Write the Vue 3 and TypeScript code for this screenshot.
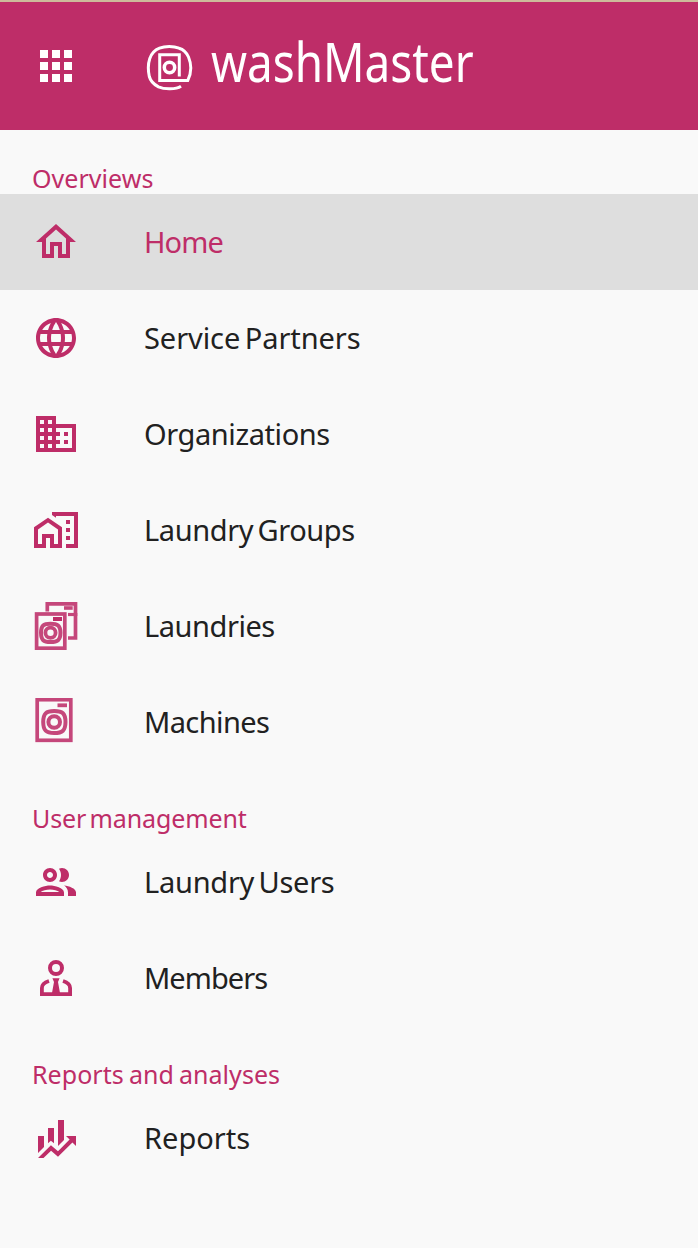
<script setup lang="ts">
interface Spaced {
  letter: number
  word?: number
}

interface MenuItem extends Spaced {
  label: string
  icon: string
  active?: boolean
}

interface MenuSection extends Spaced {
  title: string
  items: MenuItem[]
}

const paths: Record<string, string> = {
  home: 'M12 5.69l5 4.5V18h-2v-6H9v6H7v-7.81l5-4.5M12 3L2 12h3v8h6v-6h2v6h6v-8h3L12 3z',
  globe:
    'M11.99 2C6.47 2 2 6.48 2 12s4.47 10 9.99 10C17.52 22 22 17.52 22 12S17.52 2 11.99 2zm6.93 6h-2.95c-.32-1.25-.78-2.45-1.38-3.56 1.84.63 3.37 1.91 4.33 3.56zM12 4.04c.83 1.2 1.48 2.53 1.91 3.96h-3.82c.43-1.43 1.08-2.76 1.91-3.96zM4.26 14C4.1 13.36 4 12.69 4 12s.1-1.36.26-2h3.38c-.08.66-.14 1.32-.14 2s.06 1.34.14 2H4.26zm.82 2h2.95c.32 1.25.78 2.45 1.38 3.56-1.84-.63-3.37-1.9-4.33-3.56zm2.95-8H5.08c.96-1.66 2.49-2.93 4.33-3.56C8.81 5.55 8.35 6.75 8.03 8zM12 19.96c-.83-1.2-1.48-2.53-1.91-3.96h3.82c-.43 1.43-1.08 2.76-1.91 3.96zM14.34 14H9.66c-.09-.66-.16-1.32-.16-2s.07-1.35.16-2h4.68c.09.65.16 1.32.16 2s-.07 1.34-.16 2zm.25 5.56c.6-1.11 1.06-2.31 1.38-3.56h2.95c-.96 1.65-2.49 2.93-4.33 3.56zM16.36 14c.08-.66.14-1.32.14-2s-.06-1.34-.14-2h3.38c.16.64.26 1.31.26 2s-.1 1.36-.26 2h-3.38z',
  building:
    'M12 7V3H2v18h20V7H12zM6 19H4v-2h2v2zm0-4H4v-2h2v2zm0-4H4V9h2v2zm0-4H4V5h2v2zm4 12H8v-2h2v2zm0-4H8v-2h2v2zm0-4H8V9h2v2zm0-4H8V5h2v2zm10 12h-8v-2h2v-2h-2v-2h2v-2h-2V9h8v10zm-2-8h-2v2h2v-2zm0 4h-2v2h2v-2z',
  homeWork:
    'M17 15h2v2h-2zM17 11h2v2h-2zM17 7h2v2h-2zM10 3v1.5l2 1.4V5h9v14h-4v2h6V3zM8 5.9L1 10.6V21h6v-5h2v5h6V10.6zM8 8.3l5 3.4V19h-2v-5H5v5H3v-7.3z',
  people:
    'M9 13.75c-2.34 0-7 1.17-7 3.5V19h14v-1.75c0-2.33-4.66-3.5-7-3.5zM4.34 17c.84-.58 2.87-1.25 4.66-1.25s3.82.67 4.66 1.25H4.34zM9 12c1.93 0 3.5-1.57 3.5-3.5S10.93 5 9 5 5.5 6.57 5.5 8.5 7.07 12 9 12zm0-5c.83 0 1.5.67 1.5 1.5S9.83 10 9 10s-1.5-.67-1.5-1.5S8.17 7 9 7zm7.04 6.81c1.16.84 1.96 1.96 1.96 3.44V19h4v-1.75c0-2.02-3.5-3.17-5.96-3.44zM15 12c1.93 0 3.5-1.57 3.5-3.5S16.93 5 15 5c-.54 0-1.04.13-1.5.35.63.89 1 1.98 1 3.15s-.37 2.26-1 3.15c.46.22.96.35 1.5.35z',
  chart:
    'M6,16.5L3,19.44V11H6M11,14.66L9.43,13.32L8,14.64V7H11M16,13L13,16V3H16M18.81,12.81L17,11H22V16L20.21,14.21L13,21.36L9.53,18.34L5.75,22H3L9.47,15.66L13,18.64',
}

const sections: MenuSection[] = [
  {
    title: 'Overviews',
    letter: 0.05,
    items: [
      { label: 'Home', icon: 'home', letter: -0.9, active: true },
      { label: 'Service Partners', icon: 'globe', letter: -0.07, word: -3 },
      { label: 'Organizations', icon: 'building', letter: -0.4 },
      { label: 'Laundry Groups', icon: 'homeWork', letter: -0.38, word: -3 },
      { label: 'Laundries', icon: 'laundries', letter: -0.45 },
      { label: 'Machines', icon: 'machine', letter: -0.6 },
    ],
  },
  {
    title: 'User management',
    letter: -0.12,
    word: -3,
    items: [
      { label: 'Laundry Users', icon: 'people', letter: -0.25, word: -3 },
      { label: 'Members', icon: 'member', letter: -0.95 },
    ],
  },
  {
    title: 'Reports and analyses',
    letter: 0.05,
    word: -1.5,
    items: [{ label: 'Reports', icon: 'chart', letter: 0 }],
  },
]

function spacing(text: Spaced) {
  return { letterSpacing: `${text.letter}px`, wordSpacing: `${text.word ?? 0}px` }
}
</script>

<template>
  <div class="app">
    <header class="bar">
      <svg class="apps" viewBox="0 0 32 32" fill="#fff" shape-rendering="crispEdges">
        <path
          d="M0 0h8v8H0zM12 0h8v8h-8zM24 0h8v8h-8zM0 12h8v8H0zM12 12h8v8h-8zM24 12h8v8h-8zM0 24h8v8H0zM12 24h8v8h-8zM24 24h8v8h-8z"
        />
      </svg>
      <svg class="logo" viewBox="0 0 48 48" fill="none" stroke="#fff">
        <path
          d="M36 42.200C31 45.500 19.500 45.600 13.500 42.800C8.500 40.300 5.500 37 4.300 32.500C2.900 26 2.900 20 4.800 14.500C6.500 9.500 10 6 14.500 4.200C20 2 28.500 2 34 4.200C38.500 5.500 41.500 8.500 43.500 13C46.400 20 46.400 29 42.800 36.400H14.700V10.700H34.300V32.500"
          stroke-width="3"
        />
        <circle cx="24.500" cy="23.500" r="5.200" stroke-width="3.500" />
      </svg>
      <span class="brand">washMaster</span>
    </header>

    <nav>
      <section v-for="section in sections" :key="section.title">
        <h2 class="title">
          <span :style="spacing(section)">{{ section.title }}</span>
        </h2>
        <a v-for="item in section.items" :key="item.label" class="row" :class="{ active: item.active }">
          <svg v-if="paths[item.icon]" class="icon" viewBox="0 0 24 24" fill="currentColor" fill-rule="evenodd">
            <path :d="paths[item.icon]" />
          </svg>
          <svg v-else-if="item.icon === 'laundries'" class="icon" viewBox="0 0 48 48" fill="none" stroke="#c5477b">
            <path d="M15.300 9.500V1.900H43.500V36H36" stroke-width="3.700" />
            <path d="M36 12.500h9.300" stroke-width="3.200" />
            <path d="M32 6h8.700" stroke-width="3.600" />
            <rect x="4.600" y="12" width="28.200" height="34.200" stroke-width="3.700" />
            <path d="M21 17h9" stroke="#be2d68" stroke-width="4" />
            <path
              d="M18.500 21.700C25.500 21.700 28.400 23.500 28.500 30.800C28.400 38.200 25.500 40 18.500 40C11.500 40 9.100 38.200 9 30.800C9.100 23.500 11.500 21.700 18.500 21.700z"
              stroke-width="4"
            />
            <circle cx="18.500" cy="30.800" r="5.100" stroke-width="3.800" />
          </svg>
          <svg v-else-if="item.icon === 'machine'" class="icon" viewBox="0 0 48 48" fill="none" stroke="#c5477b">
            <rect x="5.200" y="1.700" width="33.600" height="40.600" stroke-width="3.700" />
            <path d="M25.500 7.300h9.500" stroke-width="3.800" />
            <path
              d="M22.200 13C30.500 13 33.400 15.500 33.500 24C33.400 32.500 30.500 35 22.200 35C14 35 11.300 32.500 11.200 24C11.300 15.500 14 13 22.200 13z"
              stroke-width="4"
            />
            <circle cx="22.200" cy="24" r="5.800" stroke-width="4" />
          </svg>
          <svg v-else class="icon" viewBox="0 0 24 24" fill="none" stroke="currentColor" stroke-width="1.900">
            <circle cx="12" cy="7" r="3" stroke-width="2" />
            <path d="M8.500 13.500C6.300 14.200 4.950 15.300 4.950 17V20.050H19.050V17C19.050 15.300 17.700 14.200 15.500 13.500" />
            <path
              d="M10.200 12.100h3.600l-.8 1.900 1.100 6H9.900L11 14z"
              fill="currentColor"
              stroke="none"
            />
          </svg>
          <span class="label" :style="spacing(item)">{{ item.label }}</span>
        </a>
      </section>
    </nav>
  </div>
</template>

<style>
body {
  margin: 0;
  background: #f9f9f9;
}
</style>

<style scoped>
.app {
  height: 1248px;
  overflow: hidden;
  background: #f9f9f9;
  color: #212121;
  font-family: 'Noto Sans', 'Open Sans', sans-serif;
}

.bar {
  box-sizing: border-box;
  display: flex;
  align-items: center;
  height: 130px;
  padding: 0 40px;
  border-top: 2px solid #cdbb9b;
  background: #be2d68;
  color: #fff;
}

.apps {
  width: 32px;
  height: 32px;
}

.logo {
  width: 48px;
  height: 48px;
  margin: 4px 0 0 73px;
}

.brand {
  margin: -11px 0 0 18px;
  font-size: 55.5px;
  line-height: 76px;
  transform: scaleX(0.826);
  transform-origin: 0 50%;
}

.title {
  box-sizing: border-box;
  height: 64px;
  margin: 0;
  padding: 33px 32px 0;
  color: #be2d68;
  font-size: 25px;
  font-weight: 400;
  line-height: 30px;
  white-space: nowrap;
}

.row {
  display: flex;
  align-items: center;
  height: 96px;
  padding: 0 32px;
  gap: 64px;
}

.row.active {
  background: #dedede;
}

.icon {
  flex: none;
  width: 48px;
  height: 48px;
  color: #be2d68;
}

.label {
  font-size: 29px;
  line-height: 40px;
  white-space: nowrap;
}

.active .label {
  color: #be2d68;
}
</style>
